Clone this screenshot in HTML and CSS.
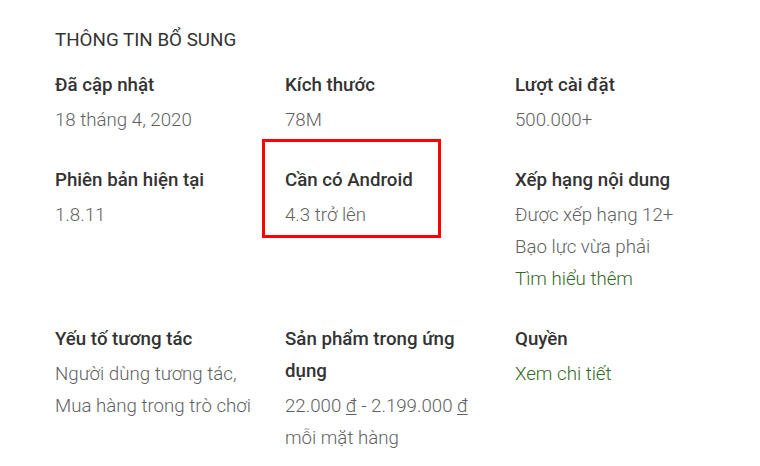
FILE: index.html
```html
<!DOCTYPE html>
<html lang="vi">
<head>
<meta charset="utf-8">
<link rel="stylesheet" href="styles.css">
</head>
<body>
<section class="info">
  <h2 class="title">THÔNG TIN BỔ SUNG</h2>
  <div class="grid">
    <div class="item">
      <div class="label">Đã cập nhật</div>
      <div class="value">18 tháng 4, 2020</div>
    </div>
    <div class="item">
      <div class="label">Kích thước</div>
      <div class="value">78M</div>
    </div>
    <div class="item">
      <div class="label">Lượt cài đặt</div>
      <div class="value">500.000+</div>
    </div>
    <div class="item">
      <div class="label">Phiên bản hiện tại</div>
      <div class="value">1.8.11</div>
    </div>
    <div class="item highlight">
      <div class="label">Cần có Android</div>
      <div class="value">4.3 trở lên</div>
    </div>
    <div class="item">
      <div class="label">Xếp hạng nội dung</div>
      <div class="value">Được xếp hạng 12+</div>
      <div class="value">Bạo lực vừa phải</div>
      <div class="value link">Tìm hiểu thêm</div>
    </div>
    <div class="item">
      <div class="label">Yếu tố tương tác</div>
      <div class="value">Người dùng tương tác, Mua hàng trong trò chơi</div>
    </div>
    <div class="item">
      <div class="label">Sản phẩm trong ứng dụng</div>
      <div class="value">22.000 <u>đ</u> - 2.199.000 <u>đ</u> mỗi mặt hàng</div>
    </div>
    <div class="item">
      <div class="label">Quyền</div>
      <div class="value link">Xem chi tiết</div>
    </div>
  </div>
</section>
</body>
</html>
```
FILE: styles.css
```css
html, body {
  margin: 0;
  padding: 0;
  background: #fff;
}
body {
  font-family: Roboto, "Noto Sans", sans-serif;
  color: #333;
}
.info {
  padding: 25px 0 0 55px;
}
.title {
  margin: 0 0 14px 0;
  font-size: 18.8px;
  font-weight: 400;
  line-height: 30px;
  color: #333;
}
.grid {
  display: grid;
  grid-template-columns: 230px 230px 230px;
  row-gap: 28px;
}
.item {
  position: relative;
  width: 205px;
}
.label {
  font-size: 18.7px;
  font-weight: 500;
  line-height: 32px;
  color: #333;
}
.label + .value {
  margin-top: 3px;
}
.value {
  font-size: 18.7px;
  font-weight: 300;
  line-height: 32px;
  color: #616161;
}
.value u {
  text-decoration-thickness: 1px;
  text-underline-offset: 2px;
}
.link {
  color: #33691e;
}
.highlight::before {
  content: "";
  position: absolute;
  left: -23px;
  top: -25px;
  width: 173px;
  height: 93px;
  border: 3px solid #f00;
}
```
